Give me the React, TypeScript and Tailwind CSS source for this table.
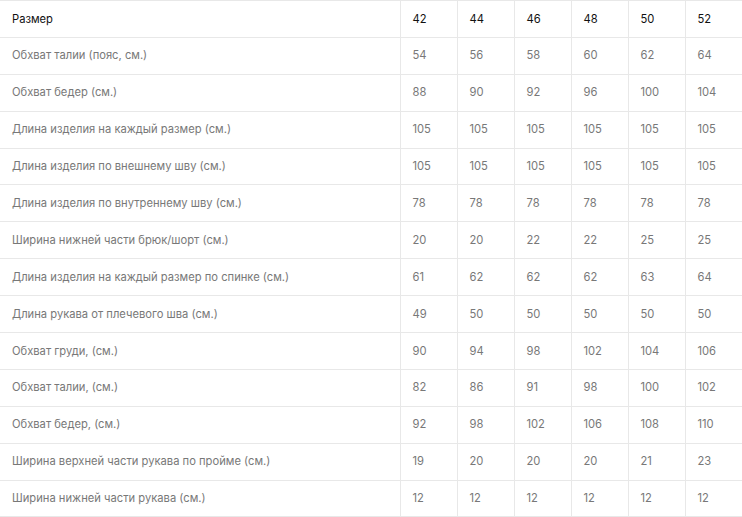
import React from "react";

const header = ["Размер", "42", "44", "46", "48", "50", "52"];
const rows: (string | number)[][] = [
  ["Обхват талии (пояс, см.)", 54, 56, 58, 60, 62, 64],
  ["Обхват бедер (см.)", 88, 90, 92, 96, 100, 104],
  ["Длина изделия на каждый размер (см.)", 105, 105, 105, 105, 105, 105],
  ["Длина изделия по внешнему шву (см.)", 105, 105, 105, 105, 105, 105],
  ["Длина изделия по внутреннему шву (см.)", 78, 78, 78, 78, 78, 78],
  ["Ширина нижней части брюк/шорт (см.)", 20, 20, 22, 22, 25, 25],
  ["Длина изделия на каждый размер по спинке (см.)", 61, 62, 62, 62, 63, 64],
  ["Длина рукава от плечевого шва (см.)", 49, 50, 50, 50, 50, 50],
  ["Обхват груди, (см.)", 90, 94, 98, 102, 104, 106],
  ["Обхват талии, (см.)", 82, 86, 91, 98, 100, 102],
  ["Обхват бедер, (см.)", 92, 98, 102, 106, 108, 110],
  ["Ширина верхней части рукава по пройме (см.)", 19, 20, 20, 20, 21, 23],
  ["Ширина нижней части рукава (см.)", 12, 12, 12, 12, 12, 12],
];

export default function App() {
  return (
    <div className="w-[742px] h-[517px] bg-white overflow-hidden" style={{ fontFamily: "Inter, 'Noto Sans', sans-serif" }}>
      <table className="w-[742px] border-collapse table-fixed text-[11.2px]">
        <colgroup>
          <col className="w-[400px]" />
          <col />
          <col />
          <col />
          <col />
          <col />
          <col />
        </colgroup>
        <thead>
          <tr className="h-[36.9px]">
            {header.map((h, i) => (
              <th
                key={i}
                className={`border-y border-[#e8e8e8] ${i > 0 ? "border-l" : ""} text-left align-middle font-normal text-[#111111] pl-3 p-0`}
              >
                {h}
              </th>
            ))}
          </tr>
        </thead>
        <tbody>
          {rows.map((r, ri) => (
            <tr key={ri} className="h-[36.9px]">
              {r.map((c, ci) => (
                <td
                  key={ci}
                  className={`border-y border-[#e8e8e8] ${ci > 0 ? "border-l" : ""} text-left align-middle text-[#787878] pl-3 p-0`}
                >
                  {c}
                </td>
              ))}
            </tr>
          ))}
        </tbody>
      </table>
    </div>
  );
}
